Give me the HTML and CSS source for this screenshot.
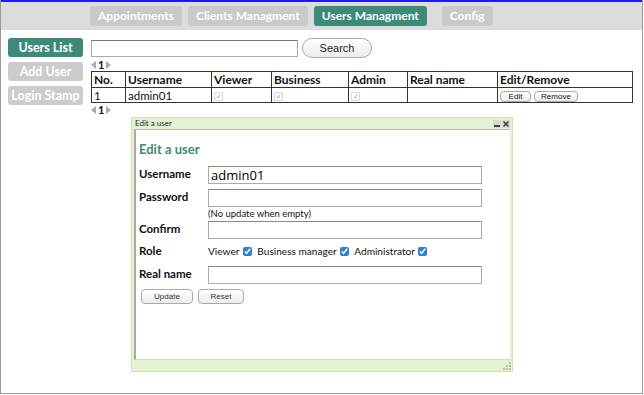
FILE: index.html
```html
<!DOCTYPE html>
<html lang="en">

<head>
    <meta charset="UTF-8">
    <meta name="viewport" content="width=device-width, initial-scale=1.0">
    <title>Users Managment</title>
    <link rel="stylesheet" href="styles.css">
</head>

<body>
    <div id="page">
        <div id="topbar">
            <a class="tab" href="#">Appointments</a>
            <a class="tab" href="#">Clients Managment</a>
            <a class="tab active" href="#">Users Managment</a>
            <a class="tab tab-far" href="#">Config</a>
        </div>

        <div id="main">
            <div id="sidebar">
                <a class="side-btn active" href="#">Users List</a>
                <a class="side-btn" href="#">Add User</a>
                <a class="side-btn" href="#">Login Stamp</a>
            </div>

            <div id="content">
                <div class="search-row">
                    <input class="search-box" type="text">
                    <button class="pill">Search</button>
                </div>

                <div class="pager"><span class="arr arr-l"></span><b>1</b><span class="arr arr-r"></span></div>
                <table class="users">
                    <tr>
                        <th class="c-no">No.</th>
                        <th class="c-user">Username</th>
                        <th class="c-view">Viewer</th>
                        <th class="c-bus">Business</th>
                        <th class="c-adm">Admin</th>
                        <th class="c-real">Real name</th>
                        <th>Edit/Remove</th>
                    </tr>
                    <tr>
                        <td>1</td>
                        <td>admin01</td>
                        <td><span class="tick">&#10003;</span></td>
                        <td><span class="tick">&#10003;</span></td>
                        <td><span class="tick">&#10003;</span></td>
                        <td></td>
                        <td><button class="pill small">Edit</button> <button class="pill small wide">Remove</button></td>
                    </tr>
                </table>
                <div class="pager"><span class="arr arr-l"></span><b>1</b><span class="arr arr-r"></span></div>
            </div>
        </div>

        <!-- popup window over the list -->
        <div id="dialog">
            <div class="dlg-title">
                <span>Edit a user</span>
                <span class="dlg-icons">
                    <svg width="8" height="8" viewBox="0 0 8 8"><rect x="0" y="0" width="8" height="8" fill="#d8d8d8"/><rect x="1" y="5" width="6" height="2" fill="#444"/></svg>
                    <svg width="8" height="8" viewBox="0 0 8 8"><rect x="0" y="0" width="8" height="8" fill="#d8d8d8"/><path d="M1.5 1.5 L6.5 6.5 M6.5 1.5 L1.5 6.5" stroke="#333" stroke-width="1.4"/></svg>
                </span>
            </div>
            <div class="dlg-body">
                <h2>Edit a user</h2>
                <div class="form-row">
                    <label>Username</label>
                    <input class="field" type="text" value="admin01">
                </div>
                <div class="form-row">
                    <label>Password</label>
                    <input class="field" type="password">
                </div>
                <div class="hint">(No update when empty)</div>
                <div class="form-row">
                    <label>Confirm</label>
                    <input class="field" type="password">
                </div>
                <div class="form-row role-row">
                    <label>Role</label>
                    <span class="roles">
                        Viewer <input type="checkbox" checked>
                        Business manager <input type="checkbox" checked>
                        Administrator <input type="checkbox" checked>
                    </span>
                </div>
                <div class="form-row">
                    <label>Real name</label>
                    <input class="field" type="text">
                </div>
                <div class="form-btns">
                    <button class="sq-btn">Update</button>
                    <button class="sq-btn">Reset</button>
                </div>
            </div>
            <div class="dlg-foot">
                <svg width="8" height="8" viewBox="0 0 8 8"><rect x="6" y="0" width="2" height="2" fill="#bbb"/><rect x="3" y="3" width="2" height="2" fill="#bbb"/><rect x="6" y="3" width="2" height="2" fill="#bbb"/><rect x="0" y="6" width="2" height="2" fill="#bbb"/><rect x="3" y="6" width="2" height="2" fill="#bbb"/><rect x="6" y="6" width="2" height="2" fill="#bbb"/></svg>
            </div>
        </div>
    </div>
</body></html>
```

FILE: styles.css
```css
body {
    margin: 0;
    font-family: Lato, "Open Sans", sans-serif;
    color: #111;
}

#page {
    position: relative;
    height: 394px;
    border: 1px solid #9a9a9a;
    border-top: none;
    box-sizing: border-box;
    width: 643px;
}

#topbar {
    height: 28px;
    border-top: 2px solid #1b1bf0;
    box-shadow: inset 0 1px 0 #e8e2c8;
    background: #dcdcdc;
    display: flex;
    align-items: center;
    padding-left: 89px;
}

.tab {
    display: block;
    height: 20px;
    line-height: 20px;
    padding: 0 8px;
    margin-right: 6px;
    border-radius: 3px;
    background: #c9c9c9;
    color: #fff;
    font-weight: bold;
    font-size: 12px;
    text-decoration: none;
}

.tab.active {
    background: #3b8b78;
}

.tab-far {
    margin-left: 9px;
}

#main {
    display: flex;
    padding-top: 8px;
}

#sidebar {
    display: flex;
    flex-direction: column;
    gap: 5px;
    padding-left: 7px;
    width: 75px;
}

.side-btn {
    display: block;
    height: 19px;
    line-height: 19px;
    border-radius: 3px;
    background: #cccccc;
    color: #fff;
    font-weight: bold;
    font-size: 12.5px;
    text-align: center;
    text-decoration: none;
}

.side-btn.active {
    background: #3b8b78;
}

#content {
    padding-left: 8px;
    width: 542px;
}

.search-row {
    display: flex;
    align-items: center;
    gap: 4px;
}

.search-box {
    width: 207px;
    height: 17px;
    box-sizing: border-box;
    border: 1px solid #aaa;
    border-top-color: #777;
    margin: 0;
}

.pill {
    font-family: "Liberation Sans", Arial, sans-serif;
    font-size: 11px;
    color: #222;
    width: 70px;
    height: 20px;
    border: 1px solid #aaa;
    border-radius: 10px;
    background: linear-gradient(#fff, #ececec);
    padding: 0;
}

.pill.small {
    font-size: 8px;
    width: 31px;
    height: 11px;
    border-radius: 4px;
    line-height: 9px;
}

.pill.small.wide {
    width: 44px;
}

.pager {
    display: flex;
    align-items: center;
    height: 13px;
    font-size: 11px;
    gap: 2px;
}

.arr {
    width: 0;
    height: 0;
    border: 4px solid transparent;
}

.arr-l {
    border-right: 5px solid #aaa;
    border-left: 0;
}

.arr-r {
    border-left: 5px solid #aaa;
    border-right: 0;
}

.users {
    border-collapse: collapse;
    width: 542px;
    font-size: 12px;
}

.users th,
.users td {
    border: 1px solid #333;
    padding: 0 2px;
    text-align: left;
    height: 14px;
}

.users th {
    font-weight: bold;
}

.users td {
    font-size: 11.5px;
    height: 13px;
}

.c-no { width: 29px; }
.c-user { width: 81px; }
.c-view { width: 55px; }
.c-bus { width: 72px; }
.c-adm { width: 54px; }
.c-real { width: 85px; }

.tick {
    display: inline-block;
    width: 7px;
    height: 7px;
    border: 1px solid #d8d8d8;
    border-radius: 1px;
    font-size: 7px;
    line-height: 7px;
    color: #999;
    text-align: center;
    vertical-align: middle;
}

#dialog {
    position: absolute;
    left: 130px;
    top: 117px;
    width: 382px;
    height: 255px;
    border: 1px solid #c9e6a9;
    background: #e4f2d3;
    box-sizing: border-box;
    display: flex;
    flex-direction: column;
}

.dlg-title {
    height: 11px;
    font-size: 8px;
    line-height: 11px;
    padding: 0 2px 0 3px;
    display: flex;
    justify-content: space-between;
    color: #222;
}

.dlg-icons {
    display: flex;
    gap: 1px;
    align-items: center;
}

.dlg-body {
    flex: 1;
    background: #fff;
    margin: 0 2px 0 2px;
    border-left: 2px solid #a8a8a8;
    border-top: 1px solid #b8b8b8;
    border-bottom: 1px solid #c9e6a9;
    padding: 0 0 0 3px;
    font-size: 11px;
}

.dlg-body h2 {
    margin: 11px 0 9px 0;
    font-size: 13px;
    color: #3b8b78;
    font-weight: bold;
}

.form-row {
    display: flex;
    align-items: center;
    margin-bottom: 5px;
}

.form-row label {
    width: 69px;
    font-weight: bold;
    font-size: 11.5px;
    margin-top: -3px;
}

.field {
    width: 274px;
    height: 18px;
    box-sizing: border-box;
    border: 1px solid #aaa;
    border-top-color: #888;
    margin: 0;
    font-family: "Open Sans", sans-serif;
    font-size: 13px;
    padding: 0 2px;
}

.hint {
    margin: -4px 0 2px 69px;
    font-size: 9.5px;
}

.role-row {
    margin: 4px 0 9px;
}

.role-row label {
    margin-top: 0;
}

.roles {
    font-size: 10.1px;
}

.roles input {
    accent-color: #2f7fd4;
    width: 9px;
    height: 9px;
    margin: 0 3px 0 1px;
    vertical-align: -1px;
}

.form-btns {
    display: flex;
    gap: 5px;
    margin-top: 4px;
    padding-left: 2px;
}

.sq-btn {
    font-family: "Liberation Sans", Arial, sans-serif;
    font-size: 8px;
    color: #333;
    width: 52px;
    height: 15px;
    border: 1px solid #aaa;
    border-radius: 4px;
    background: linear-gradient(#fff, #ececec);
    padding: 0;
}

.sq-btn + .sq-btn {
    width: 46px;
}

.dlg-foot {
    height: 10px;
    display: flex;
    justify-content: flex-end;
    align-items: flex-end;
    padding: 0 1px 1px 0;
}
```
